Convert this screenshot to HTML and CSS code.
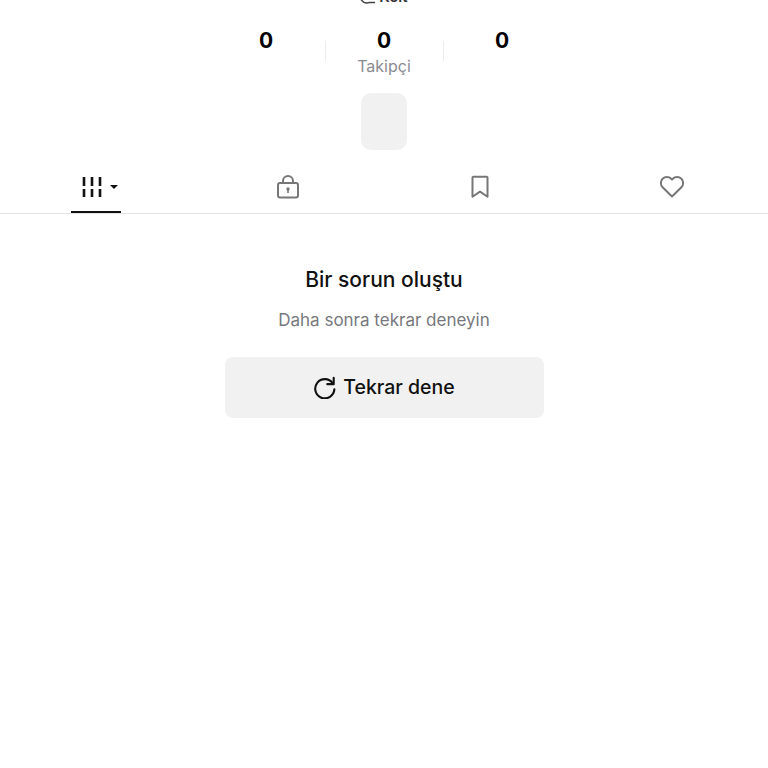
FILE: index.html
```html
<!DOCTYPE html>
<html lang="tr">
<head>
<meta charset="utf-8">
<title>Profil</title>
<link rel="stylesheet" href="styles.css">
</head>
<body>
<div class="clip">
  <svg class="clip-icon" width="18" height="18" viewBox="0 0 18 18"><path d="M2 3a7.500 7.500 0 0 0 7.500 12.500H15" fill="none" stroke="#444" stroke-width="1.500"/></svg>
  <span class="clip-text">Kelt</span>
</div>
<div class="stats">
  <div class="stat"><div class="num">0</div></div>
  <div class="sep"></div>
  <div class="stat"><div class="num">0</div><div class="label">Takipçi</div></div>
  <div class="sep"></div>
  <div class="stat"><div class="num">0</div></div>
</div>
<div class="chip"></div>
<nav class="tabs">
  <div class="tab">
    <div class="active-tab">
      <svg width="22" height="24" viewBox="0 0 22 24"><path d="M3 2v9M11 2v9M19 2v9M3 14v8M11 14v8M19 14v8" stroke="#111" stroke-width="2.600" fill="none"/></svg>
      <span class="caret"></span>
    </div>
  </div>
  <div class="tab">
    <svg width="24" height="26" viewBox="0 0 24 26"><rect x="2" y="9" width="20" height="14.500" rx="2" fill="none" stroke="#777" stroke-width="2"/><path d="M7 9V7a5 5 0 0 1 10 0v2" fill="none" stroke="#777" stroke-width="2"/><circle cx="12" cy="15" r="1.700" fill="#777"/><path d="M12 15v4" stroke="#777" stroke-width="1.600"/></svg>
  </div>
  <div class="tab">
    <svg width="20" height="24" viewBox="0 0 20 24"><path d="M2.500 2.800a1 1 0 0 1 1-1h13a1 1 0 0 1 1 1v19l-7.500-5.200-7.500 5.200z" fill="none" stroke="#777" stroke-width="2" stroke-linejoin="round"/></svg>
  </div>
  <div class="tab">
    <svg width="26" height="24" viewBox="0 0 26 24"><path d="M13 21.500 3.600 12.200a6 6 0 0 1 0-8.400 6.200 6.200 0 0 1 8.600 0l.8.8.8-.8a6.200 6.200 0 0 1 8.600 0 6 6 0 0 1 0 8.400z" fill="none" stroke="#777" stroke-width="2" stroke-linejoin="round"/></svg>
  </div>
</nav>
<main class="error">
  <h2 class="title">Bir sorun oluştu</h2>
  <p class="desc">Daha sonra tekrar deneyin</p>
  <button class="retry">
    <svg width="23" height="23" viewBox="0 0 24 24"><path d="M20.500 7.500A10 10 0 1 0 22.300 14" fill="none" stroke="#111" stroke-width="2.200" stroke-linecap="round"/><path d="M21.600 1.800v6.700h-6.700" fill="none" stroke="#111" stroke-width="2.200" stroke-linejoin="round" stroke-linecap="round"/></svg>
    <span>Tekrar dene</span>
  </button>
</main>
</body>
</html>
```
FILE: styles.css
```css
* { box-sizing: border-box; }
html, body { margin: 0; padding: 0; background: #fff; }
body { font-family: Inter, "Liberation Sans", sans-serif; color: #111; width: 768px; height: 768px; overflow: hidden; }

.clip { height: 5px; overflow: hidden; display: flex; justify-content: center; align-items: flex-end; gap: 1px; }
.clip-icon { flex: none; }
.clip-text { font-size: 15px; line-height: 15px; font-weight: 600; color: #333; flex: none; margin-bottom: 1px; }

.stats { display: flex; justify-content: center; align-items: flex-start; margin-top: 24px; height: 64px; }
.stat { width: 117px; text-align: center; }
.num { font-size: 21px; line-height: 24px; font-weight: 700; color: #000; }
.label { font-size: 16px; line-height: 20px; color: #8a8b91; margin-top: 3px; }
.sep { width: 1px; height: 20px; background: #ececed; margin-top: 12px; }

.chip { width: 46px; height: 57px; background: #f1f1f2; border-radius: 10px; margin: 0 auto; }

.tabs { display: flex; height: 64px; border-bottom: 1px solid #e3e3e4; }
.tab { flex: 1; display: flex; align-items: center; justify-content: center; padding-top: 11px; }
.active-tab { display: flex; align-items: center; gap: 7px; width: 50px; height: 53px; align-self: flex-end; padding-left: 10px; padding-top: 3px; border-bottom: 2px solid #111; }
.caret { width: 0; height: 0; border-left: 4.500px solid transparent; border-right: 4.500px solid transparent; border-top: 4.500px solid #111; }

.error { display: flex; flex-direction: column; align-items: center; }
.title { font-size: 21px; line-height: 28px; font-weight: 500; margin: 52px 0 0; color: #111; }
.desc { font-size: 17px; line-height: 22px; font-weight: 400; margin: 15px 0 0; color: #77787d; }
.retry { width: 319px; height: 61px; margin-top: 26px; border: 0; border-radius: 8px; background: #f1f1f2; display: flex; align-items: center; justify-content: center; gap: 7px; font-family: inherit; font-size: 19.500px; font-weight: 500; color: #111; padding: 0 0 1px; }
```
